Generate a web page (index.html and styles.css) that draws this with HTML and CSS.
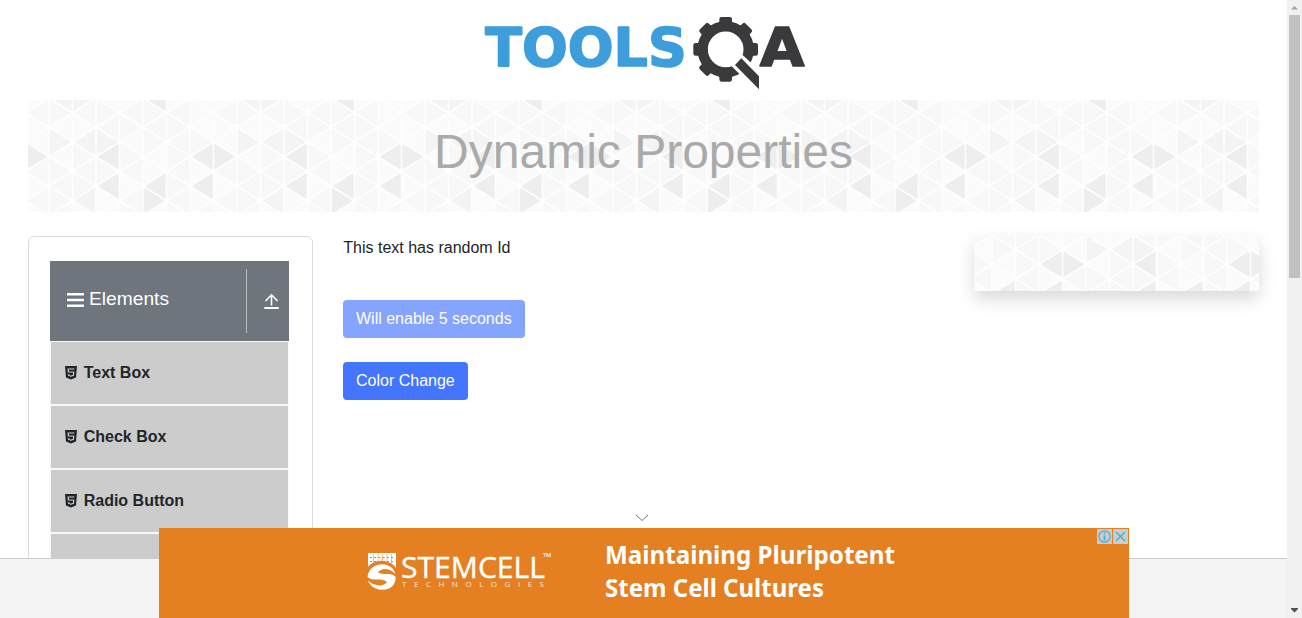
FILE: index.html
```
<!DOCTYPE html>
<html lang="en">
<head>
<meta charset="utf-8">
<title>ToolsQA</title>
<link rel="stylesheet" href="styles.css">
</head>
<body>
<div class="page">
  <header class="site-header">
    <svg class="logo" viewBox="0 0 1020 285" role="img" aria-label="ToolsQA">
      <text class="logo-tools" x="31" y="184" textLength="604" lengthAdjust="spacingAndGlyphs">TOOLS</text>
      <g fill="#3a3a3c">
        <circle cx="752" cy="133" r="69" fill="none" stroke="#3a3a3c" stroke-width="31"/>
        <g id="teeth">
          <path id="tooth" d="M726 60L733 50V43q0-7 6-7h26q6 0 6 7v7l7 10z"/>
          <use href="#tooth" transform="rotate(45 752 133)"/>
          <use href="#tooth" transform="rotate(90 752 133)"/>
          <use href="#tooth" transform="rotate(180 752 133)"/>
          <use href="#tooth" transform="rotate(225 752 133)"/>
          <use href="#tooth" transform="rotate(270 752 133)"/>
          <use href="#tooth" transform="rotate(315 752 133)"/>
        </g>
        <path d="M770 184L803 150L862 205V262L841 254z" fill="#fff"/>
        <path d="M780 180L799 160L852 214V253z"/>
      </g>
      <text class="logo-a" x="854" y="184" textLength="134" lengthAdjust="spacingAndGlyphs">A</text>
    </svg>
  </header>
  <div class="banner">
    <svg class="mosaic" aria-hidden="true"></svg>
    <h1 class="banner-title">Dynamic Properties</h1>
  </div>
  <div class="columns">
    <aside class="sidebar">
      <div class="group-header">
        <svg class="bars" viewBox="0 0 17 16"><path d="M1 2.2h15M1 8h15M1 13.8h15" stroke="#fff" stroke-width="2.6" stroke-linecap="round"/></svg>
        <span class="group-title">Elements</span>
        <span class="group-toggle">
          <svg width="16" height="18" viewBox="0 0 16 18" fill="none" stroke="#fff"><path d="M7.5 12.500V1.500M1.500 8L7.500 1.800L13.500 8" stroke-width="1.600"/><path d="M.3 15h14.500" stroke-width="2"/></svg>
        </span>
      </div>
      <ul class="menu">
        <li class="menu-item"><svg class="html5"><use href="#html5"/></svg>Text Box</li>
        <li class="menu-item"><svg class="html5"><use href="#html5"/></svg>Check Box</li>
        <li class="menu-item"><svg class="html5"><use href="#html5"/></svg>Radio Button</li>
        <li class="menu-item"></li>
      </ul>
    </aside>
    <main class="content">
      <p class="note">This text has random Id</p>
      <button class="btn" disabled>Will enable 5 seconds</button>
      <button class="btn">Color Change</button>
    </main>
    <aside class="promo"><svg class="mosaic" aria-hidden="true"></svg></aside>
  </div>
</div>

<div class="anchor-bar"></div>
<svg class="chevron" viewBox="0 0 14 8"><path d="M1 1L7 6.5L13 1" fill="none" stroke="#777" stroke-width="1"/></svg>
<div class="ad">
  <svg class="ad-art" viewBox="0 0 970 90">
    <g class="ad-mark">
      <path d="M209 25h28v16q-4-5-14-5t-14 7z" fill="#fff"/>
      <path d="M211 29.5h24M211 33.5h24" stroke="#e47f22" stroke-width="1" stroke-dasharray="2 2.2" fill="none"/>
      <path d="M214.5 26v11M219 26v10M223.500 26v10M228 26v10M232.500 26v11" stroke="#e47f22" stroke-width=".5"/>
      <path d="M208 49C209 33 232 31 236.500 46" fill="none" stroke="#e47f22" stroke-width="6"/>
      <path d="M208.500 49C210 33 233 32 236.500 46C230 39 222 40 219 44.500C224 47.500 232 44 236.500 48.500C238 65 214 66 209 52.500C216 59 225 58.500 228 54C222 49 214 54 208.500 49z" fill="#fff"/>
    </g>
    <text class="ad-brand" x="242" y="49.500" textLength="144" lengthAdjust="spacingAndGlyphs">STEMCELL</text>
    <text class="ad-tm" x="384" y="33">™</text>
    <text class="ad-sub" x="243" y="59" textLength="142">TECHNOLOGIES</text>
    <text class="ad-head" x="446" y="36" textLength="290" lengthAdjust="spacingAndGlyphs">Maintaining Pluripotent</text>
    <text class="ad-head" x="446" y="69" textLength="219" lengthAdjust="spacingAndGlyphs">Stem Cell Cultures</text>
  </svg>
  <div class="ad-controls">
    <svg viewBox="0 0 15 15"><circle cx="7.500" cy="7.500" r="5.700" fill="none" stroke="#3fb3d6" stroke-width="1.200"/><path d="M7.500 6.500v5M7.500 3.500v1.800" stroke="#3fb3d6" stroke-width="1.800"/></svg>
    <svg viewBox="0 0 15 15"><path d="M3 3l9 9M12 3l-9 9" stroke="#3fb3d6" stroke-width="1.400"/></svg>
  </div>
</div>

<div class="scrollbar">
  <svg width="15" height="15"><path d="M4 9.500L7.500 6L11 9.500z" fill="#a3a3a3"/></svg>
  <div class="thumb"></div>
  <svg class="arrow-down" width="15" height="15"><path d="M4 5h7v1L7.500 9.500L4 6z" fill="#505050"/></svg>
</div>

<svg width="0" height="0" class="defs">
  <defs>
    <symbol id="html5" viewBox="0 0 12 14">
      <path d="M0 0h12l-1 11.500L6 13.500L1 11.500z" fill="#212529"/>
      <path d="M9.300 3H3.200l.2 3h5.300l-.3 3.400L6 10.200l-2.300-.8-.1-1.300" fill="none" stroke="#ccc" stroke-width="1.200"/>
    </symbol>
  </defs>
</svg>
<script src="mosaic.js"></script>
</body>
</html>
```
FILE: styles.css
```
* { box-sizing: border-box; }
body {
  margin: 0;
  height: 618px;
  overflow: hidden;
  position: relative;
  background: #fff;
  color: #212529;
  font: 16px/24px "Liberation Sans", Arial, sans-serif;
}
.page { width: 1287px; height: 618px; padding: 0 28px; overflow: hidden; }
.site-header { height: 100px; padding: 5px 0 0 447px; }
.logo { display: block; width: 340px; height: 95px; }
.logo-tools, .logo-a {
  font: bold 162px "DejaVu Sans", sans-serif;
  stroke-width: 5px;
  stroke-linejoin: round;
}
.logo-tools { fill: #3e9edb; stroke: #3e9edb; }
.logo-a { fill: #3a3a3c; stroke: #3a3a3c; }

.banner { height: 112px; display: grid; background: #fefefe; }
.mosaic { grid-area: 1 / 1; width: 100%; height: 100%; display: block; }
.banner-title {
  grid-area: 1 / 1;
  z-index: 1;
  margin: 0;
  padding-top: 23px;
  text-align: center;
  font-size: 48px;
  line-height: 57px;
  font-weight: 400;
  color: #aaa;
}

.columns { display: flex; align-items: flex-start; margin-top: 24px; }
.sidebar {
  width: 285px;
  height: 600px;
  padding: 24px 23px 0 21px;
  border: 1px solid #dcdcdc;
  border-radius: 6px;
}
.group-header {
  height: 80px;
  display: flex;
  align-items: center;
  padding-left: 17px;
  background: #6f757c;
  color: #fff;
}
.bars { width: 17px; height: 16px; margin-top: -3px; }
.group-title { margin: -4px 0 0 5px; font-size: 19.2px; }
.group-toggle {
  margin-left: auto;
  width: 43px;
  height: 64px;
  padding: 24px 0 0 17px;
  border-left: 1px solid #bbb;
}
.group-toggle svg { display: block; }
.menu { list-style: none; margin: 0; padding: 1px; background: #f8f8f8; }
.menu-item {
  height: 62px;
  margin-bottom: 2px;
  padding-left: 14px;
  display: flex;
  align-items: center;
  gap: 6.700px;
  background: #ccc;
  font-weight: 700;
}
.html5 { width: 12px; height: 14px; }

.content {
  flex: 1;
  padding-left: 30px;
  display: flex;
  flex-direction: column;
  align-items: flex-start;
}
.note { margin: 0 0 40px; padding-left: .3px; }
.btn {
  height: 38px;
  margin-bottom: 24px;
  padding: 0 13px;
  border: 0;
  border-radius: 4px;
  background: #4475ff;
  color: #fff;
  font: inherit;
}
.btn:disabled { opacity: .65; }
.promo {
  width: 285px;
  height: 55px;
  background: #fefefe;
  box-shadow: 0 8px 16px rgba(0, 0, 0, .15);
}

.anchor-bar {
  position: absolute;
  left: 0;
  top: 558px;
  width: 1287px;
  height: 60px;
  border-top: 1px solid #ccc;
  background: #f4f4f4;
}
.chevron { position: absolute; left: 635px; top: 514px; width: 14px; height: 8px; }
.ad {
  position: absolute;
  left: 159px;
  top: 528px;
  width: 970px;
  height: 90px;
  background: #e47f22;
}
.ad-art { display: block; width: 970px; height: 90px; fill: #fff; }
.ad-brand { font: 29px "Open Sans", sans-serif; stroke: #fff; stroke-width: .4px; }
.ad-tm { font: 11px "Open Sans", sans-serif; }
.ad-sub { font: 8px "Open Sans", sans-serif; fill: #fbe3c8; }
.ad-head { font: bold 25px "Noto Sans", sans-serif; }
.ad-controls { position: absolute; top: 1px; right: 1px; display: flex; gap: 1px; }
.ad-controls svg { width: 15px; height: 15px; background: #ccc; }

.scrollbar {
  position: absolute;
  right: 0;
  top: 0;
  width: 15px;
  height: 618px;
  display: flex;
  flex-direction: column;
  background: #f1f1f1;
}
.thumb { height: 263px; margin: 0 2px; background: #c1c1c1; }
.arrow-down { margin-top: auto; }
.defs { position: absolute; }
```
FILE: mosaic.js
```
// Repeating triangle mosaic, centred in each panel.
const COL = 23.5, HALF = 14.67;
const FILLS = ["#fbfbfb", "#f8f8f8", "#f4f4f4", "#eeeeee"];
// Each triangle shrinks towards its centroid, which leaves the light seams.
const SCALE = 0.8;
// One string per half-row, one digit per column; the sequence repeats every 8 columns.
const ROWS = [
  "02200300", "11111110", "00011110", "02220111", "30131013",
  "11111010", "01130313", "11201310", "01001011"
];
for (const svg of document.querySelectorAll(".mosaic")) {
  const { width, height } = svg.getBoundingClientRect();
  // The pair of dark triangles in the middle row sits 54px left of centre.
  const originX = width / 2 - 54;
  const originY = height / 2 + 0.7;
  const first = -Math.ceil(originX / COL) - 1;
  const last = Math.ceil((width - originX) / COL);
  let shapes = "";
  for (let row = 0; row < ROWS.length; row++) {
    const y = originY + (row - 4) * HALF;
    for (let col = first; col <= last; col++) {
      const k = ((col % 8) + 8) % 8;
      const left = originX + col * COL;
      const dir = (k + row) % 2 === 0 ? 1 : -1;
      const centre = left + (dir === 1 ? COL / 3 : COL * 2 / 3);
      const base = centre - dir * SCALE * COL / 3;
      const apex = centre + dir * SCALE * COL * 2 / 3;
      const h = HALF * SCALE;
      const fill = FILLS[ROWS[row][k]];
      shapes += `<path d="M${base} ${y - h}L${apex} ${y}L${base} ${y + h}z" fill="${fill}" stroke="${fill}" stroke-width="1.6" stroke-linejoin="round"/>`;
    }
  }
  svg.innerHTML = shapes;
}
```
